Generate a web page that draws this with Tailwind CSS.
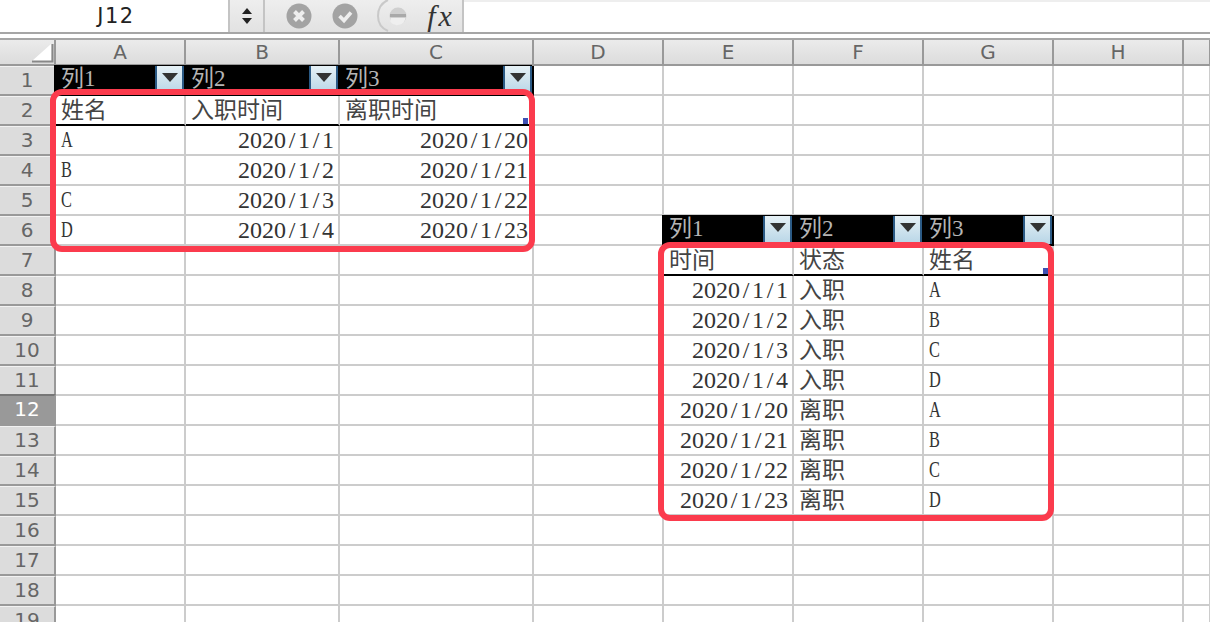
<!DOCTYPE html>
<html lang="en">

<head>
    <meta charset="UTF-8" />
    <meta name="viewport" content="width=device-width, initial-scale=1.0" />
    <title>Sheet</title>
    <script src="https://cdn.jsdelivr.net/npm/@tailwindcss/browser@4"></script>
</head>

<body class="bg-white overflow-hidden">

    <div class="relative w-[1210px] h-[622px] overflow-hidden">

        <!-- formula bar -->
        <div class="flex h-[34px] border-b-2 border-[#a6a6a6] bg-white">
            <div class="w-[228px] pl-[4px] text-center text-[21px] leading-[33px] tracking-[1.5px] text-[#222] font-['DejaVu_Sans',sans-serif]">J12</div>
            <div class="w-[236px] flex items-center bg-gradient-to-b from-[#eeeeee] to-[#e2e2e2] border-x-2 border-[#c4c4c4]">
                <div class="w-[35px] h-full flex flex-col items-center justify-center gap-[4px] border-r-2 border-[#c4c4c4]">
                    <div class="w-0 h-0 border-x-[5px] border-x-transparent border-b-[6px] border-b-[#222]"></div>
                    <div class="w-0 h-0 border-x-[5px] border-x-transparent border-t-[6px] border-t-[#222]"></div>
                </div>
                <svg class="ml-[21px]" width="26" height="26" viewBox="0 0 26 26">
                    <circle cx="13" cy="13" r="12.5" fill="#a3a3a3" />
                    <path d="M8.500 8.500 17.500 17.500M17.500 8.500 8.500 17.500" stroke="#eee" stroke-width="4" />
                </svg>
                <svg class="ml-[20px]" width="26" height="26" viewBox="0 0 26 26">
                    <circle cx="13" cy="13" r="12.5" fill="#a3a3a3" />
                    <path d="M7.500 13 12 17.500 19 9.500" fill="none" stroke="#eee" stroke-width="3.600" />
                </svg>
                <svg class="ml-[14px]" width="40" height="32" viewBox="0 0 40 32">
                    <path d="M16 0C9 3 6 9 6 16S9 28 16 31" fill="none" stroke="#c9c9c9" stroke-width="2" />
                    <circle cx="26" cy="16" r="8.500" fill="#cfcfcf" />
                    <rect x="18" y="14" width="16" height="3" fill="#a9a9a9" />
                    <path d="M18.500 18h15a8.500 8.500 0 0 1-15 4z" fill="#efefef" />
                </svg>
                <div class="ml-[9px] w-[40px] text-center text-[30px] leading-[30px] tracking-[3px] italic text-[#333] font-['Liberation_Serif',serif]">fx</div>
            </div>
            <div class="flex-1 border-t-2 border-[#eeeeee]"></div>
        </div>

        <!-- sheet -->
        <div id="sheet" class="mt-[4px] border-t-2 border-[#a6a6a6]"></div>

        <!-- red highlight boxes -->
        <div class="absolute left-[50px] top-[89px] w-[485px] h-[163px] border-[6px] border-[#fb3b4d] rounded-[12px]"></div>
        <div class="absolute left-[658px] top-[242px] w-[396px] h-[279px] border-[6px] border-[#fb3b4d] rounded-[12px]"></div>
    </div>

    <script>
        const widths = [130, 154, 194, 130, 130, 130, 130, 130, 27];
        const letters = ['A', 'B', 'C', 'D', 'E', 'F', 'G', 'H', ''];
        const sheet = document.querySelector('#sheet');

        // col index -> cell content, by row number
        const cells = {
            1: { 0: ['列1', 'f'], 1: ['列2', 'f'], 2: ['列3', 'f'] },
            2: { 0: ['姓名', 'h'], 1: ['入职时间', 'h'], 2: ['离职时间', 'h'] },
            3: { 0: ['A', 'l'], 1: ['2020/1/1', 'r'], 2: ['2020/1/20', 'r'] },
            4: { 0: ['B', 'l'], 1: ['2020/1/2', 'r'], 2: ['2020/1/21', 'r'] },
            5: { 0: ['C', 'l'], 1: ['2020/1/3', 'r'], 2: ['2020/1/22', 'r'] },
            6: { 0: ['D', 'l'], 1: ['2020/1/4', 'r'], 2: ['2020/1/23', 'r'], 4: ['列1', 'f'], 5: ['列2', 'f'], 6: ['列3', 'f'] },
            7: { 4: ['时间', 'h'], 5: ['状态', 'h'], 6: ['姓名', 'h'] },
            8: { 4: ['2020/1/1', 'r'], 5: ['入职', 't'], 6: ['A', 'l'] },
            9: { 4: ['2020/1/2', 'r'], 5: ['入职', 't'], 6: ['B', 'l'] },
            10: { 4: ['2020/1/3', 'r'], 5: ['入职', 't'], 6: ['C', 'l'] },
            11: { 4: ['2020/1/4', 'r'], 5: ['入职', 't'], 6: ['D', 'l'] },
            12: { 4: ['2020/1/20', 'r'], 5: ['离职', 't'], 6: ['A', 'l'] },
            13: { 4: ['2020/1/21', 'r'], 5: ['离职', 't'], 6: ['B', 'l'] },
            14: { 4: ['2020/1/22', 'r'], 5: ['离职', 't'], 6: ['C', 'l'] },
            15: { 4: ['2020/1/23', 'r'], 5: ['离职', 't'], 6: ['D', 'l'] },
        };

        const serif = "font-['Liberation_Serif','Noto_Sans_CJK_SC',serif]";
        const filterBtn = `
          <div class="absolute right-[2px] top-0 w-[29px] h-[28px] flex justify-center pt-[7px] border-x-2 border-[#2b5a85] bg-gradient-to-b from-[#e6f1f6] to-[#b7d5e6]">
            <div class="w-0 h-0 border-x-[8px] border-x-transparent border-t-[9px] border-t-[#333]"></div>
          </div>`;

        function renderHeader() {
            let html = `<div class="flex h-[26px] border-b-2 border-[#999] bg-gradient-to-b from-[#ebebeb] to-[#dcdcdc] text-[20px] leading-[24px] text-[#666] font-['DejaVu_Sans',sans-serif]">
              <div class="w-[56px] shrink-0 border-r-2 border-[#999]">
                <svg width="54" height="24" viewBox="0 0 54 24">
                  <path d="M32 21 51 4v17z" fill="#fff" />
                  <path d="M32 21.500H52.500V4" fill="none" stroke="#888" stroke-width="2" />
                </svg>
              </div>`;
            widths.forEach((w, i) => {
                html += `<div class="shrink-0 text-center border-r-2 border-[#999]" style="width:${w}px">${letters[i]}</div>`;
            });
            return html + '</div>';
        }

        function renderCell(w, i, row, cell) {
            const kind = cell ? cell[1] : '';
            const text = cell ? cell[0] : '';
            if (kind === 'f') {
                return `<div class="relative shrink-0 h-[30px] bg-black shadow-[-2px_-1px_0_#000] pl-[5px] text-[23px] leading-[25px] text-[#b5b5b5] ${serif}" style="width:${w}px">${text}${filterBtn}</div>`;
            }
            if (kind === 'h') {
                const corner = i === 2 || i === 6 ? '<div class="absolute right-[4px] bottom-0 w-[5px] h-[6px] bg-[#3f51b5]"></div>' : '';
                return `<div class="relative shrink-0 h-[30px] border-b-2 border-b-black border-r-2 border-r-[#ccc] pl-[5px] text-[23px] leading-[29px] text-[#444] ${serif}" style="width:${w}px">${text}${corner}</div>`;
            }
            if (kind === 'r') {
                const date = text.replace(/\//g, '<span class="inline-block w-[12px] text-center">/</span>');
                return `<div class="shrink-0 h-[30px] border-b-2 border-r-2 border-[#ccc] pr-[4px] text-right text-[24px] leading-[28px] text-[#333] ${serif}" style="width:${w}px">${date}</div>`;
            }
            if (kind === 'l') {
                return `<div class="shrink-0 h-[30px] border-b-2 border-r-2 border-[#ccc] pl-[5px] text-[24px] leading-[26px] text-[#333] ${serif}" style="width:${w}px"><span class="inline-block origin-left scale-x-[0.68]">${text}</span></div>`;
            }
            if (kind === 't') {
                return `<div class="shrink-0 h-[30px] border-b-2 border-r-2 border-[#ccc] pl-[5px] text-[23px] leading-[29px] text-[#444] ${serif}" style="width:${w}px">${text}</div>`;
            }
            return `<div class="shrink-0 h-[30px] border-b-2 border-r-2 border-[#ccc]" style="width:${w}px"></div>`;
        }

        function renderRows() {
            let html = '';
            for (let row = 1; row <= 19; row++) {
                const active = row === 12;
                html += `<div class="flex h-[30px]">
                  <div class="w-[56px] shrink-0 text-center border-b-2 border-r-2 border-[#999] ${active ? 'bg-[#999] text-white border-t-2 border-t-[#777] -mt-[2px] h-[32px]' : 'bg-[#dcdcdc] text-[#666] h-[30px] border-t border-t-[#f2f2f2]'} text-[20px] leading-[27px] font-['DejaVu_Sans',sans-serif]">${row}</div>`;
                widths.forEach((w, i) => {
                    html += renderCell(w, i, row, (cells[row] || {})[i]);
                });
                html += '</div>';
            }
            return html;
        }

        sheet.innerHTML = renderHeader() + renderRows();
    </script>
</body>

</html>
